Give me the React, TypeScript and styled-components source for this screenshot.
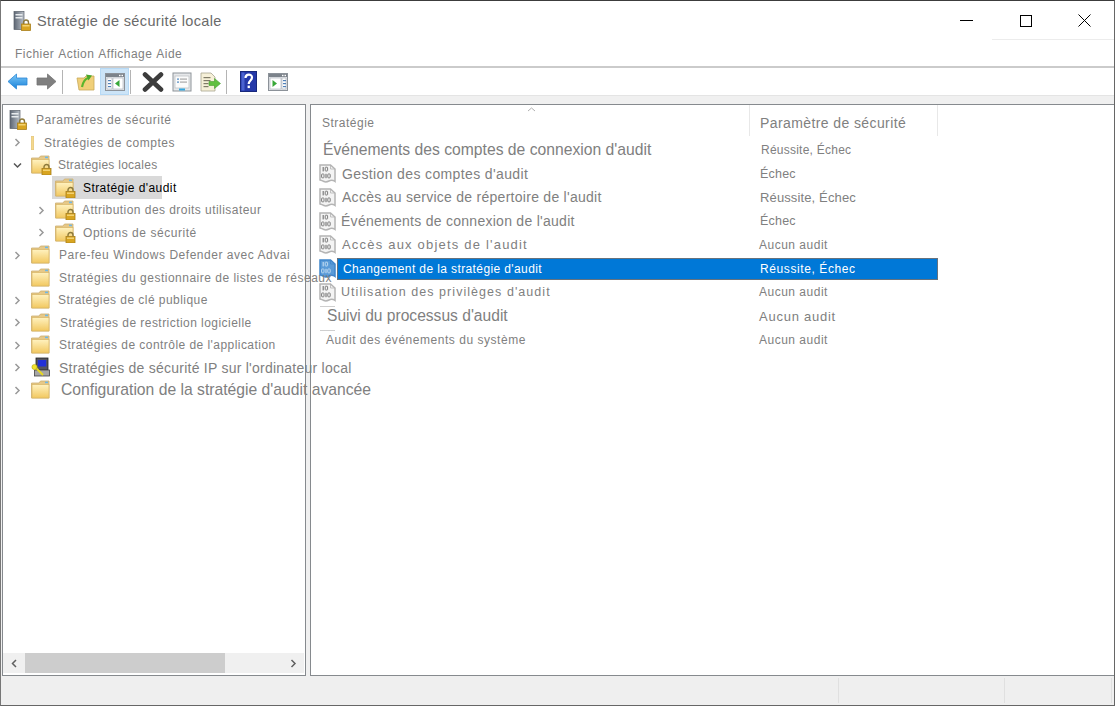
import React, { FC } from 'react';
import styled, { createGlobalStyle } from 'styled-components';

const GlobalStyle = createGlobalStyle`
  html, body {
    margin: 0;
    padding: 0;
    background: #fff;
  }
  body {
    font-family: "Liberation Sans", Arial, sans-serif;
    overflow: hidden;
  }
`;

const TEXT = '#808080';

const Frame = styled.div`
  width: 1115px;
  height: 706px;
  box-sizing: border-box;
  display: flex;
  flex-direction: column;
  background: #fff;
  border-top: 1px solid #3c3c3c;
  border-left: 1px solid #777;
  border-right: 1px solid #666;
  border-bottom: 1px solid #666;
  overflow: hidden;
`;

const TitleBar = styled.div`
  position: relative;
  height: 39px;
  flex: none;
  display: flex;
  align-items: center;
  padding-left: 12px;
  &::after {
    content: '';
    position: absolute;
    right: 0;
    bottom: 0;
    width: 122px;
    height: 1px;
    background: #ececec;
  }
`;

const AppTitle = styled.div`
  margin-left: 6px;
  font-size: 14.5px;
  letter-spacing: 0.35px;
  color: #6a6a6a;
  white-space: nowrap;
  flex: 1;
`;

const CaptionButton = styled.div`
  width: 59px;
  height: 38px;
  display: flex;
  align-items: center;
  justify-content: center;
`;

const MenuBar = styled.div`
  height: 26px;
  flex: none;
  display: flex;
  align-items: center;
  gap: 4px;
  padding: 2px 0 0 14px;
  box-sizing: border-box;
  font-size: 12px;
  letter-spacing: 0.46px;
  color: ${TEXT};
`;

const Toolbar = styled.div`
  height: 30px;
  flex: none;
  box-sizing: border-box;
  display: flex;
  align-items: flex-end;
  padding-left: 2px;
  border-top: 2px solid #cbcbcb;
  border-bottom: 1px solid #e4e4e4;
`;

const ToolButton = styled.div<{ $active?: boolean }>`
  width: 29px;
  height: 27px;
  box-sizing: border-box;
  display: flex;
  align-items: center;
  justify-content: center;
  background: ${(p) => (p.$active ? '#cce4f7' : 'transparent')};
  border: 1px solid ${(p) => (p.$active ? '#b6d9f5' : 'transparent')};
  svg {
    filter: blur(0.45px);
  }
`;

const ToolSeparator = styled.div<{ $trail: number }>`
  width: 1px;
  height: 24px;
  align-self: center;
  background: #b4b4b4;
  margin: 0 ${(p) => p.$trail}px 0 1px;
`;

const Strip = styled.div`
  height: 8px;
  flex: none;
  background: #f0f0f0;
`;

const Workspace = styled.div`
  height: 572px;
  flex: none;
  display: flex;
  gap: 4px;
  padding-left: 1px;
  background: #f0f0f0;
`;

const TreePane = styled.div`
  position: relative;
  z-index: 1;
  width: 304px;
  box-sizing: border-box;
  display: flex;
  flex-direction: column;
  background: #fff;
  border: 1px solid #868a8e;
`;

const Tree = styled.div`
  flex: 1;
  padding-top: 4px;
`;

const TreeRow = styled.div<{ $indent: number }>`
  height: 22.5px;
  display: flex;
  align-items: center;
  padding-left: ${(p) => p.$indent}px;
  white-space: nowrap;
`;

const ChevronSlot = styled.div`
  width: 14px;
  flex: none;
  display: flex;
  align-items: center;
  justify-content: center;
`;

const TreeIcon = styled.div<{ $gap: number }>`
  margin-left: ${(p) => p.$gap}px;
  display: flex;
  flex: none;
  svg {
    filter: blur(0.3px);
  }
`;

const SelectedNode = styled.div`
  width: 110px;
  height: 23px;
  padding-left: 3px;
  box-sizing: border-box;
  display: flex;
  align-items: center;
  background: #d9d9d9;
`;

const Label = styled.span<{ $size: number; $track: number; $gap: number; $dark?: boolean }>`
  margin-left: ${(p) => p.$gap}px;
  font-size: ${(p) => p.$size}px;
  letter-spacing: ${(p) => p.$track}px;
  color: ${(p) => (p.$dark ? '#000' : TEXT)};
`;

const ScrollBar = styled.div`
  height: 20px;
  flex: none;
  margin-bottom: 2px;
  margin-right: 1px;
  display: flex;
  background: #f0f0f0;
`;

const ScrollArrow = styled.div`
  width: 22px;
  display: flex;
  align-items: center;
  justify-content: center;
`;

const ScrollThumb = styled.div`
  width: 200px;
  background: #cdcdcd;
`;

const ScrollTrack = styled.div`
  flex: 1;
`;

const ListPane = styled.div`
  flex: 1;
  box-sizing: border-box;
  background: #fff;
  border: 1px solid #868a8e;
  border-right: none;
`;

const ListHeader = styled.div`
  position: relative;
  width: 627px;
  height: 31px;
  margin-bottom: 2px;
  display: grid;
  grid-template-columns: 439px 188px;
  color: ${TEXT};
`;

const SortCaret = styled.svg`
  position: absolute;
  left: 216px;
  top: 2px;
`;

const HeaderCell = styled.div<{ $size: number; $track: number; $pad: number }>`
  display: flex;
  align-items: center;
  padding: 4px 0 0 ${(p) => p.$pad}px;
  font-size: ${(p) => p.$size}px;
  letter-spacing: ${(p) => p.$track}px;
  border-right: 1px solid #e8e8e8;
`;

const ListRow = styled.div`
  position: relative;
  width: 627px;
  height: 23.75px;
  box-sizing: border-box;
  display: flex;
  align-items: center;
  padding-left: 8px;
`;

const RowIcon = styled.div`
  width: 18px;
  flex: none;
  display: flex;
  align-items: center;
  svg {
    filter: blur(0.3px);
  }
`;

const StubLine = styled.div`
  position: absolute;
  left: 9px;
  top: 2px;
  width: 15px;
  height: 1px;
  background: #cfcfcf;
`;

const RowCells = styled.div<{ $selected?: boolean }>`
  flex: 1;
  min-width: 0;
  height: ${(p) => (p.$selected ? '22px' : '100%')};
  box-sizing: border-box;
  display: grid;
  grid-template-columns: 1fr 189px;
  align-items: center;
  white-space: nowrap;
  color: ${(p) => (p.$selected ? '#fff' : TEXT)};
  background: ${(p) => (p.$selected ? '#0078d7' : 'transparent')};
  outline: ${(p) => (p.$selected ? '1px solid #66727e' : 'none')};
  outline-offset: -1px;
`;

const Cell = styled.span<{ $size: number; $track: number; $pad: number }>`
  padding-left: ${(p) => p.$pad}px;
  font-size: ${(p) => p.$size}px;
  letter-spacing: ${(p) => p.$track}px;
`;

const StatusBar = styled.div`
  flex: 1;
  display: flex;
  justify-content: flex-end;
  background: #efefef;
  padding: 2px 2px 2px 0;
`;

const StatusCell = styled.div<{ $width: number }>`
  width: ${(p) => p.$width}px;
  box-sizing: border-box;
  border-left: 1px solid #e0e0e0;
`;

const StatusEnd = styled.div`
  width: 1px;
  background: #e0e0e0;
`;

const Chevron: FC<{ dir?: 'right' | 'left' | 'down'; color?: string }> = ({
  dir = 'right',
  color = '#999',
}) => {
  const d = {
    right: 'M2.5 1 L6 4.5 L2.5 8',
    left: 'M6 1 L2.5 4.5 L6 8',
    down: 'M1 2.5 L4.5 6 L8 2.5',
  }[dir];
  return (
    <svg width="9" height="9" viewBox="0 0 9 9">
      <path d={d} fill="none" stroke={color} strokeWidth="1.5" />
    </svg>
  );
};

const Padlock: FC<{ x: number; y: number }> = ({ x, y }) => (
  <g transform={`translate(${x} ${y})`}>
    <path d="M2.5 4.5 V3 a2.5 2.5 0 0 1 5 0 V4.5" fill="none" stroke="#8d7a3c" strokeWidth="1.4" />
    <rect x="0.5" y="4.5" width="9" height="6.5" fill="#d9a520" stroke="#a87f1c" strokeWidth="0.8" />
    <rect x="1.5" y="5.5" width="7" height="1.5" fill="#f3d272" />
  </g>
);

const FolderIcon: FC<{ lock?: boolean }> = ({ lock }) => (
  <svg width="21" height="20" viewBox="0 0 21 20">
    <defs>
      <linearGradient id="folderFill" x1="0" y1="0" x2="0" y2="1">
        <stop offset="0" stopColor="#fff2c0" />
        <stop offset="1" stopColor="#f2c860" />
      </linearGradient>
    </defs>
    <path d="M0.5 3 H8 L9.5 1 H18 V18 H0.5 Z" fill="#e6c888" stroke="#cdae70" strokeWidth="0.8" />
    <rect x="14" y="1.6" width="3" height="1.6" fill="#6fb7e6" />
    <rect x="1" y="4.5" width="17" height="13.5" fill="url(#folderFill)" stroke="#d8b464" strokeWidth="0.7" />
    {lock && <Padlock x={10.5} y={9} />}
  </svg>
);

const FolderSliver: FC = () => (
  <svg width="3" height="14" viewBox="0 0 3 14">
    <rect width="3" height="14" fill="#f4d88e" stroke="#d8bb78" strokeWidth="0.6" />
  </svg>
);

const ServerLockIcon: FC = () => (
  <svg width="18" height="20" viewBox="0 0 18 20">
    <defs>
      <linearGradient id="towerFill" x1="0" y1="0" x2="1" y2="0">
        <stop offset="0" stopColor="#5d6673" />
        <stop offset="1" stopColor="#b9c0c8" />
      </linearGradient>
    </defs>
    <rect x="1" y="0.5" width="10" height="18" fill="url(#towerFill)" stroke="#59606a" strokeWidth="0.7" />
    <rect x="2.5" y="3" width="7" height="1.5" fill="#e8ebee" />
    <rect x="2.5" y="6" width="7" height="1.5" fill="#e8ebee" />
    <Padlock x={8} y={8.5} />
  </svg>
);

const ComputerKeyIcon: FC = () => (
  <svg width="20" height="21" viewBox="0 0 20 21">
    <rect x="5" y="1" width="12" height="12" fill="#55555f" stroke="#222" strokeWidth="0.8" />
    <rect x="6.8" y="3" width="8.4" height="6.5" fill="#2230d8" />
    <rect x="3.5" y="13" width="15" height="6" fill="#a6a6a6" stroke="#444" strokeWidth="0.8" />
    <path d="M4 10 L12 18" stroke="#e8d820" strokeWidth="2" />
    <circle cx="3.5" cy="10" r="2.6" fill="#f2e22c" stroke="#b8a818" strokeWidth="0.6" />
  </svg>
);

const BinaryDocIcon: FC<{ selected?: boolean }> = ({ selected }) => {
  const paper = selected ? '#5a9bd8' : '#f4f4f4';
  const edge = selected ? '#3f86cc' : '#b4b4b4';
  const mark = selected ? '#bcd8f0' : '#7c7c7c';
  const zero = (x: number, y: number) => (
    <rect x={x} y={y} width="2.4" height="3.8" rx="0.6" fill="none" stroke={mark} strokeWidth="1" />
  );
  const one = (x: number, y: number) => <rect x={x} y={y} width="1.2" height="4.4" fill={mark} />;
  return (
    <svg width="17" height="19" viewBox="0 0 17 19">
      <path
        d="M1 1 H11.5 L16 5 V17.5 Q13 15.5 10 17 T5 17.5 T1 16 Z"
        fill={paper}
        stroke={edge}
        strokeWidth="1.5"
      />
      <path d="M11.5 1 V5 H16" fill="none" stroke={edge} strokeWidth="0.8" />
      {one(3.6, 3)}
      {zero(6.2, 3.2)}
      {zero(2.6, 10)}
      {one(6.4, 9.8)}
      {zero(8.8, 10)}
    </svg>
  );
};

const BackArrow: FC = () => (
  <svg width="21" height="17" viewBox="0 0 21 17">
    <defs>
      <linearGradient id="backFill" x1="0" y1="0" x2="0" y2="1">
        <stop offset="0" stopColor="#7cc8f8" />
        <stop offset="1" stopColor="#1a82d8" />
      </linearGradient>
    </defs>
    <path d="M1 8.5 L9.5 1 V5 H20 V12 H9.5 V16 Z" fill="url(#backFill)" stroke="#2a86d6" strokeWidth="0.8" />
  </svg>
);

const ForwardArrow: FC = () => (
  <svg width="21" height="17" viewBox="0 0 21 17">
    <path d="M20 8.5 L11.5 1 V5 H1 V12 H11.5 V16 Z" fill="#7f7f7f" stroke="#757575" strokeWidth="0.8" />
  </svg>
);

const FolderUpIcon: FC = () => (
  <svg width="20" height="20" viewBox="0 0 20 20">
    <path d="M1 6 H8 L10 4 H18 V18 H3 Z" fill="#f0cf78" stroke="#c8a858" strokeWidth="0.8" />
    <path d="M6 15 C7 10 9 7 12 6" fill="none" stroke="#5ab52c" strokeWidth="2.2" />
    <path d="M10 2.5 L16 3.5 L12.5 8.5 Z" fill="#4aa82a" />
  </svg>
);

const PaneToggleIcon: FC<{ side: 'left' | 'right' }> = ({ side }) => (
  <svg width="20" height="18" viewBox="0 0 20 18">
    <rect x="0.5" y="0.5" width="19" height="17" fill="#e4e6e8" stroke="#8c9299" />
    <rect x="1" y="1" width="18" height="3" fill="#7c838b" />
    <rect x="14" y="1.8" width="1.5" height="1.4" fill="#fff" />
    <rect x="16.5" y="1.8" width="1.5" height="1.4" fill="#fff" />
    <rect x="2" y="5" width={side === 'left' ? 5 : 11} height="11" fill="#fff" stroke="#a8b0b8" strokeWidth="0.6" />
    <rect x={side === 'left' ? 8 : 14} y="5" width={side === 'left' ? 10 : 4} height="11" fill="#fff" stroke="#a8b0b8" strokeWidth="0.6" />
    {side === 'left' ? (
      <path d="M10 10.5 L14.5 7 V14 Z" fill="#38a838" />
    ) : (
      <path d="M9 10.5 L4.5 7 V14 Z" fill="#38a838" />
    )}
    <rect x={side === 'left' ? 3 : 15} y="7" width="3" height="1.2" fill="#5080b8" />
    <rect x={side === 'left' ? 3 : 15} y="10" width="3" height="1.2" fill="#5080b8" />
    <rect x={side === 'left' ? 3 : 15} y="13" width="3" height="1.2" fill="#5080b8" />
  </svg>
);

const DeleteIcon: FC = () => (
  <svg width="22" height="20" viewBox="0 0 22 20">
    <path d="M3 2.5 L19 17.5 M19 2.5 L3 17.5" stroke="#3c3c3c" strokeWidth="4.6" strokeLinecap="round" />
  </svg>
);

const PropertiesIcon: FC = () => (
  <svg width="20" height="20" viewBox="0 0 20 20">
    <rect x="1" y="1" width="18" height="18" fill="#e6e8ea" stroke="#8e9499" />
    <rect x="3" y="4" width="14" height="12" fill="#fbfbfb" stroke="#b8bcc0" strokeWidth="0.7" />
    <rect x="5" y="6.5" width="2" height="1.2" fill="#4f88c0" />
    <rect x="8" y="6.5" width="7" height="1.2" fill="#a8a8a8" />
    <rect x="5" y="9.5" width="2" height="1.2" fill="#4f88c0" />
    <rect x="8" y="9.5" width="7" height="1.2" fill="#a8a8a8" />
    <rect x="7" y="16.5" width="6" height="2" fill="#35a8e0" />
  </svg>
);

const ExportIcon: FC = () => (
  <svg width="21" height="20" viewBox="0 0 21 20">
    <path d="M1 1 H11 L15 5 V19 H1 Z" fill="#f6f0d8" stroke="#a8a490" strokeWidth="0.8" />
    <rect x="3.5" y="5" width="7" height="1.2" fill="#807c68" />
    <rect x="3.5" y="8" width="7" height="1.2" fill="#807c68" />
    <rect x="3.5" y="11" width="5" height="1.2" fill="#807c68" />
    <rect x="3.5" y="14" width="5" height="1.2" fill="#807c68" />
    <path d="M9 9.5 H14.5 V6.5 L20.5 11.5 L14.5 16.5 V13.5 H9 Z" fill="#62c040" stroke="#4aa030" strokeWidth="0.6" />
  </svg>
);

const HelpIcon: FC = () => (
  <svg width="17" height="21" viewBox="0 0 17 21">
    <rect x="0.5" y="0.5" width="16" height="20" fill="#2438a8" stroke="#18287c" />
    <rect x="1.5" y="1.5" width="3" height="18" fill="#4a62d0" />
    <path d="M5.5 7 C5.5 2.5 12 2.5 12 6.5 C12 9.5 8.7 9.5 8.7 13" fill="none" stroke="#fff" strokeWidth="2.2" />
    <rect x="7.6" y="14.6" width="2.3" height="2.5" fill="#fff" />
  </svg>
);

type TreeNode = {
  label: string;
  indent: number;
  size: number;
  track: number;
  gap: number;
  expand?: 'right' | 'down';
  icon: React.ReactNode;
};

const TREE_TOP: TreeNode[] = [
  { label: 'Stratégies de comptes', indent: 7, size: 12, track: 0.56, gap: 10, expand: 'right', icon: <FolderSliver /> },
  { label: 'Stratégies locales', indent: 7, size: 12, track: 0.26, gap: 6, expand: 'down', icon: <FolderIcon lock /> },
];

const TREE_CHILDREN: TreeNode[] = [
  { label: 'Attribution des droits utilisateur', indent: 31, size: 12, track: 0.45, gap: 6, expand: 'right', icon: <FolderIcon lock /> },
  { label: 'Options de sécurité', indent: 31, size: 12, track: 0.55, gap: 7, expand: 'right', icon: <FolderIcon lock /> },
];

const TREE_REST: TreeNode[] = [
  { label: 'Pare-feu Windows Defender avec Advai', indent: 7, size: 12, track: 0.53, gap: 7, expand: 'right', icon: <FolderIcon /> },
  { label: 'Stratégies du gestionnaire de listes de réseaux', indent: 7, size: 12, track: 0.5, gap: 7, icon: <FolderIcon /> },
  { label: 'Stratégies de clé publique', indent: 7, size: 12, track: 0.45, gap: 6, expand: 'right', icon: <FolderIcon /> },
  { label: 'Stratégies de restriction logicielle', indent: 7, size: 12, track: 0.45, gap: 8, expand: 'right', icon: <FolderIcon /> },
  { label: "Stratégies de contrôle de l'application", indent: 7, size: 12, track: 0.45, gap: 7, expand: 'right', icon: <FolderIcon /> },
  { label: "Stratégies de sécurité IP sur l'ordinateur local", indent: 7, size: 14, track: 0.24, gap: 8, expand: 'right', icon: <ComputerKeyIcon /> },
  { label: "Configuration de la stratégie d'audit avancée", indent: 7, size: 15.7, track: 0, gap: 9, expand: 'right', icon: <FolderIcon /> },
];

type PolicyRow = {
  name: string;
  size: number;
  track: number;
  pad: number;
  value: string;
  valueSize: number;
  valueTrack: number;
  valuePad: number;
  icon?: boolean;
  stub?: boolean;
  selected?: boolean;
};

const POLICIES: PolicyRow[] = [
  { name: "Événements des comptes de connexion d'audit", size: 15.7, track: 0, pad: 4, value: 'Réussite, Échec', valueSize: 12, valueTrack: 0.24, valuePad: 12 },
  { name: "Gestion des comptes d'audit", size: 14, track: 0.37, pad: 5, value: 'Échec', valueSize: 12.5, valueTrack: 0.2, valuePad: 11, icon: true },
  { name: "Accès au service de répertoire de l'audit", size: 14, track: 0.27, pad: 5, value: 'Réussite, Échec', valueSize: 13, valueTrack: 0.13, valuePad: 11, icon: true },
  { name: "Événements de connexion de l'audit", size: 14, track: 0.27, pad: 4, value: 'Échec', valueSize: 12.5, valueTrack: 0.2, valuePad: 11, icon: true },
  { name: "Accès aux objets de l'audit", size: 13, track: 1.2, pad: 5, value: 'Aucun audit', valueSize: 12, valueTrack: 0.5, valuePad: 10, icon: true },
  { name: "Changement de la stratégie d'audit", size: 12, track: 0.39, pad: 6, value: 'Réussite, Échec', valueSize: 12, valueTrack: 0.6, valuePad: 11, icon: true, selected: true },
  { name: "Utilisation des privilèges d'audit", size: 12.5, track: 1.05, pad: 4, value: 'Aucun audit', valueSize: 12, valueTrack: 0.5, valuePad: 10, icon: true },
  { name: "Suivi du processus d'audit", size: 15.6, track: 0, pad: 8, value: 'Aucun audit', valueSize: 13, valueTrack: 0.75, valuePad: 10, stub: true },
  { name: 'Audit des événements du système', size: 12, track: 0.53, pad: 7, value: 'Aucun audit', valueSize: 12, valueTrack: 0.5, valuePad: 10, stub: true },
];

const TreeItem: FC<{ node: TreeNode }> = ({ node }) => (
  <TreeRow $indent={node.indent}>
    <ChevronSlot>
      {node.expand && <Chevron dir={node.expand} color={node.expand === 'down' ? '#555' : '#999'} />}
    </ChevronSlot>
    <TreeIcon $gap={7}>{node.icon}</TreeIcon>
    <Label $size={node.size} $track={node.track} $gap={node.gap}>
      {node.label}
    </Label>
  </TreeRow>
);

export default function App() {
  return (
    <>
      <GlobalStyle />
      <Frame>
        <TitleBar>
          <ServerLockIcon />
          <AppTitle>Stratégie de sécurité locale</AppTitle>
          <CaptionButton>
            <svg width="13" height="2" viewBox="0 0 13 2">
              <rect width="13" height="1" fill="#000" />
            </svg>
          </CaptionButton>
          <CaptionButton>
            <svg width="12" height="12" viewBox="0 0 12 12">
              <rect x="0.5" y="0.5" width="11" height="11" fill="none" stroke="#000" />
            </svg>
          </CaptionButton>
          <CaptionButton>
            <svg width="13" height="13" viewBox="0 0 13 13">
              <path d="M0.5 0.5 L12.5 12.5 M12.5 0.5 L0.5 12.5" stroke="#000" strokeWidth="1" />
            </svg>
          </CaptionButton>
        </TitleBar>
        <MenuBar>
          <span>Fichier</span>
          <span>Action</span>
          <span>Affichage</span>
          <span>Aide</span>
        </MenuBar>
        <Toolbar>
          <ToolButton><BackArrow /></ToolButton>
          <ToolButton><ForwardArrow /></ToolButton>
          <ToolSeparator $trail={8} />
          <ToolButton><FolderUpIcon /></ToolButton>
          <ToolButton $active><PaneToggleIcon side="left" /></ToolButton>
          <ToolSeparator $trail={7} />
          <ToolButton><DeleteIcon /></ToolButton>
          <ToolButton><PropertiesIcon /></ToolButton>
          <ToolButton><ExportIcon /></ToolButton>
          <ToolSeparator $trail={7} />
          <ToolButton><HelpIcon /></ToolButton>
          <ToolButton><PaneToggleIcon side="right" /></ToolButton>
        </Toolbar>
        <Strip />
        <Workspace>
          <TreePane>
            <Tree>
              <TreeRow $indent={6}>
                <ServerLockIcon />
                <Label $size={12} $track={0.52} $gap={9}>Paramètres de sécurité</Label>
              </TreeRow>
              {TREE_TOP.map((node) => (
                <TreeItem key={node.label} node={node} />
              ))}
              <TreeRow $indent={49}>
                <SelectedNode>
                  <TreeIcon $gap={0}><FolderIcon lock /></TreeIcon>
                  <Label $size={12} $track={0.43} $gap={7} $dark>Stratégie d'audit</Label>
                </SelectedNode>
              </TreeRow>
              {TREE_CHILDREN.map((node) => (
                <TreeItem key={node.label} node={node} />
              ))}
              {TREE_REST.map((node) => (
                <TreeItem key={node.label} node={node} />
              ))}
            </Tree>
            <ScrollBar>
              <ScrollArrow><Chevron dir="left" color="#606060" /></ScrollArrow>
              <ScrollThumb />
              <ScrollTrack />
              <ScrollArrow><Chevron color="#606060" /></ScrollArrow>
            </ScrollBar>
          </TreePane>
          <ListPane>
            <ListHeader>
              <SortCaret width="9" height="5" viewBox="0 0 9 5">
                <path d="M1 4 L4.5 1 L8 4" fill="none" stroke="#b0b0b0" />
              </SortCaret>
              <HeaderCell $size={12} $track={0.5} $pad={11}>Stratégie</HeaderCell>
              <HeaderCell $size={14} $track={0.4} $pad={10}>Paramètre de sécurité</HeaderCell>
            </ListHeader>
            {POLICIES.map((row) => (
              <ListRow key={row.name}>
                {row.icon && (
                  <RowIcon><BinaryDocIcon selected={row.selected} /></RowIcon>
                )}
                {row.stub && <StubLine />}
                <RowCells $selected={row.selected}>
                  <Cell $size={row.size} $track={row.track} $pad={row.pad}>{row.name}</Cell>
                  <Cell $size={row.valueSize} $track={row.valueTrack} $pad={row.valuePad}>{row.value}</Cell>
                </RowCells>
              </ListRow>
            ))}
          </ListPane>
        </Workspace>
        <StatusBar>
          <StatusCell $width={166} />
          <StatusCell $width={107} />
          <StatusEnd />
        </StatusBar>
      </Frame>
    </>
  );
}
